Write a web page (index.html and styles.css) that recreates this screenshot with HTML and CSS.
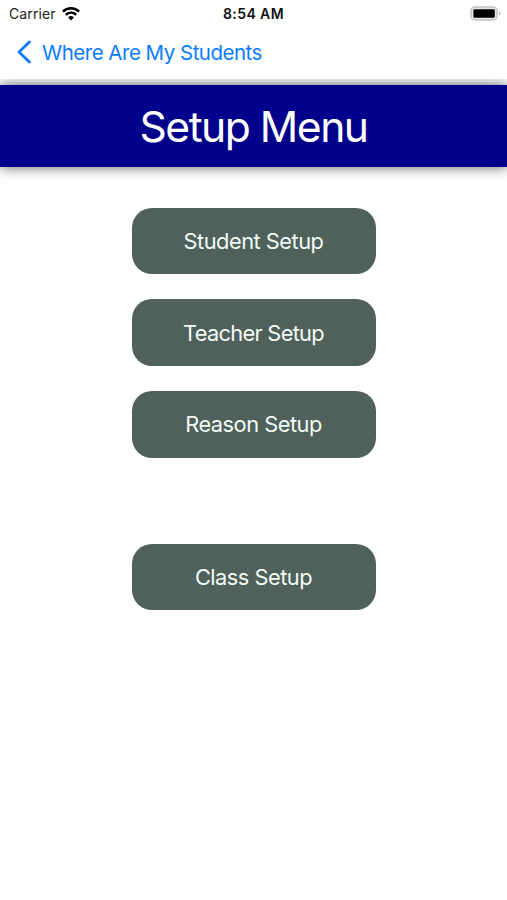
FILE: index.html
```html
<!DOCTYPE html>
<html lang="en">
<head>
    <meta charset="UTF-8">
    <title>Setup Menu</title>
    <link rel="stylesheet" href="styles.css">
</head>
<body>
    <header class="top">
        <div class="status">
            <div class="carrier">
                <span>Carrier</span>
                <svg class="wifi" width="18" height="14" viewBox="0 0 18 14" fill="none" stroke="#000" stroke-width="2.4">
                    <path d="M0.9 4.6a11.5 11.5 0 0 1 16.2 0"/>
                    <path d="M3.8 7.8a7.4 7.4 0 0 1 10.4 0"/>
                    <path d="M6.1 10.4a4.1 4.1 0 0 1 5.8 0L9 13.4z" fill="#000" stroke="none"/>
                </svg>
            </div>
            <div class="time">8:54 AM</div>
            <svg class="battery" width="31" height="15" viewBox="0 0 31 15">
                <rect x="1" y="1" width="26" height="13" rx="4" fill="#e9e9e9" stroke="#c2c2c2" stroke-width="1.5"/>
                <rect x="3.4" y="3.2" width="21.4" height="8.6" rx="1.4" fill="#000"/>
                <path d="M28.9 5.3q1.7 .7 1.7 2.2t-1.7 2.2z" fill="#bdbdbd"/>
            </svg>
        </div>
        <a class="back" href="#">
            <svg width="14" height="24" viewBox="0 0 14 24" fill="none" stroke="#0a7cff" stroke-width="2.7" stroke-linecap="round" stroke-linejoin="round">
                <path d="M12.4 2L2 12l10.4 10"/>
            </svg>
            <span>Where Are My Students</span>
        </a>
    </header>

    <main class="page">
        <h1 class="banner">Setup Menu</h1>
        <nav class="menu">
            <button class="item">Student Setup</button>
            <button class="item teacher">Teacher Setup</button>
            <button class="item">Reason Setup</button>
            <button class="item last">Class Setup</button>
        </nav>
    </main>
</body>
</html>
```

FILE: styles.css
```css
body {
    margin: 0;
    background: #fff;
    font-family: Inter, "Liberation Sans", sans-serif;
}
.top { height: 79px; }
.status {
    display: grid;
    grid-template-columns: 1fr auto 1fr;
    align-items: center;
    height: 27px;
    padding: 0 6px 0 9px;
    font-size: 14px;
}
.carrier { display: flex; align-items: center; gap: 6px; letter-spacing: 0.1px; color: #222; }
.time { margin-right: 3px; font-weight: 600; letter-spacing: 0.4px; color: #111; }
.battery { justify-self: end; }
.back {
    display: flex;
    align-items: center;
    gap: 11px;
    height: 50px;
    padding-left: 17px;
    color: #0a7cff;
    font-size: 20.5px;
    letter-spacing: -0.5px;
    text-decoration: none;
}
/* clips the banner shadow under the navigation bar */
.page { overflow: hidden; padding-top: 6px; }
.banner {
    height: 82px;
    margin: 0;
    background: #00008b;
    color: #fff;
    box-shadow: 0 0 12px rgba(0, 0, 0, 0.65);
    font-size: 42.6px;
    font-weight: 400;
    letter-spacing: -1.5px;
    line-height: 83px;
    text-align: center;
}
.menu {
    display: flex;
    flex-direction: column;
    align-items: center;
    gap: 25px;
    padding: 40.6px 0 30px;
}
.item {
    width: 244px;
    height: 66.7px;
    border: 0;
    border-radius: 20px;
    background: #50605b;
    color: #f0fbf6;
    font-family: inherit;
    font-size: 21.8px;
    letter-spacing: -0.5px;
}
.teacher { letter-spacing: -0.7px; }
.last { margin-top: 61px; }
```
